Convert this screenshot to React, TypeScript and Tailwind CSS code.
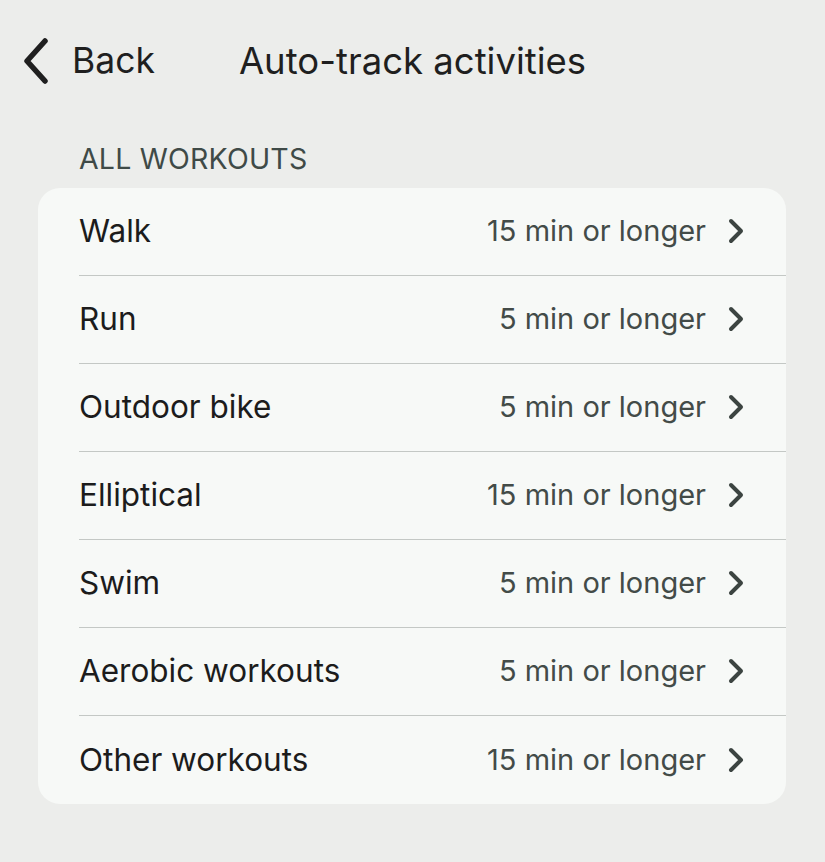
const rows = [
  { name: "Walk", value: "15 min or longer" },
  { name: "Run", value: "5 min or longer" },
  { name: "Outdoor bike", value: "5 min or longer" },
  { name: "Elliptical", value: "15 min or longer" },
  { name: "Swim", value: "5 min or longer" },
  { name: "Aerobic workouts", value: "5 min or longer" },
  { name: "Other workouts", value: "15 min or longer" },
];

function Chevron() {
  return (
    <svg width="20" height="26" viewBox="0 0 20 26" fill="none" className="text-[#3c4441]">
      <path d="M5 3l10 10-10 10" stroke="currentColor" strokeWidth="4" strokeLinecap="round" strokeLinejoin="round" />
    </svg>
  );
}

export default function App() {
  return (
    <div className="min-h-[862px] w-[825px] bg-[#ecedeb] font-['Inter',sans-serif]">
      <div className="flex h-[122px] items-center pl-[22px]">
        <button className="flex items-center gap-[22px] text-[#1f1f1f]">
          <svg width="28" height="46" viewBox="0 0 28 46" fill="none">
            <path d="M23 3L5 23l18 20" stroke="currentColor" strokeWidth="5.5" strokeLinecap="round" strokeLinejoin="round" />
          </svg>
          <span className="text-[35.5px] leading-none">Back</span>
        </button>
        <h1 className="ml-[84px] text-[36.5px] leading-none text-[#1f1f1f]">Auto-track activities</h1>
      </div>

      <div className="px-[79px] pb-[14px] pt-[23px] text-[28.5px] leading-none tracking-[0.2px] text-[#3f4a47]">ALL WORKOUTS</div>

      <div className="mx-[38px] w-[748px] overflow-hidden rounded-[22px] bg-[#f7f9f7]">
        {rows.map((r, i) => (
          <div key={r.name} className="pl-[41px]">
            <div
              className={
                "flex h-[88px] items-center justify-between pr-[40px] " +
                (i < rows.length - 1 ? "border-b border-[#c4c8c5]" : "")
              }
            >
              <span className="text-[31.5px] text-[#1c1c1c]">{r.name}</span>
              <span className="flex items-center gap-[20px] text-[29px] text-[#434b48]">
                {r.value}
                <Chevron />
              </span>
            </div>
          </div>
        ))}
      </div>
    </div>
  );
}
